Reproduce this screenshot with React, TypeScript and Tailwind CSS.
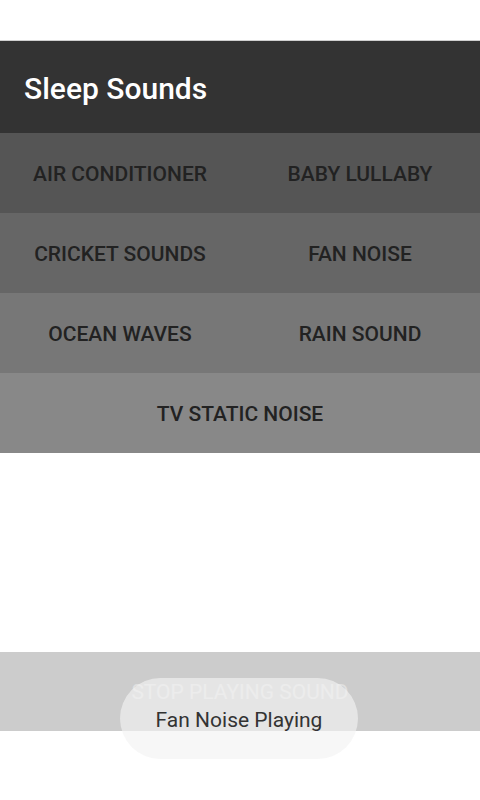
import React from 'react';

const sounds = [
  { label: 'Air Conditioner', bg: 'bg-[#555555]' },
  { label: 'Baby Lullaby', bg: 'bg-[#555555]' },
  { label: 'Cricket Sounds', bg: 'bg-[#666666]' },
  { label: 'Fan Noise', bg: 'bg-[#666666]' },
  { label: 'Ocean Waves', bg: 'bg-[#777777]' },
  { label: 'Rain Sound', bg: 'bg-[#777777]' },
];

export default function App() {
  return (
    <div className="relative flex h-[800px] w-[480px] flex-col bg-white font-['Roboto',sans-serif]">
      {/* status bar area */}
      <div className="h-[40px] shrink-0 bg-white" />

      {/* toolbar */}
      <header className="flex h-[93px] shrink-0 items-center border-t border-[#cfcfcf] bg-[#333333] px-6 pt-[4px]">
        <h1 className="text-[30px] font-medium leading-none text-white">Sleep Sounds</h1>
      </header>

      {/* sound buttons */}
      <div className="grid grid-cols-2">
        {sounds.map((s) => (
          <button
            key={s.label}
            className={`flex h-[80px] items-center justify-center ${s.bg} pt-[3px] text-[21px] font-medium uppercase text-[#222222]`}
          >
            {s.label}
          </button>
        ))}
        <button className="col-span-2 flex h-[80px] items-center justify-center bg-[#888888] pt-[3px] text-[21px] font-medium uppercase text-[#222222]">
          TV Static Noise
        </button>
      </div>

      <div className="flex-1" />

      {/* stop button */}
      <button className="mb-[69px] flex h-[79px] shrink-0 items-center justify-center bg-[#cccccc] pt-[3px] text-[21px] uppercase text-[#e0e0e0]">
        Stop Playing Sound
      </button>

      {/* toast */}
      <div className="absolute left-[120px] top-[678px] flex h-[81px] w-[238px] items-center justify-center rounded-full bg-[#f2f2f2]/65 pt-[5px] text-[21px] text-[#333333]">
        Fan Noise Playing
      </div>
    </div>
  );
}
